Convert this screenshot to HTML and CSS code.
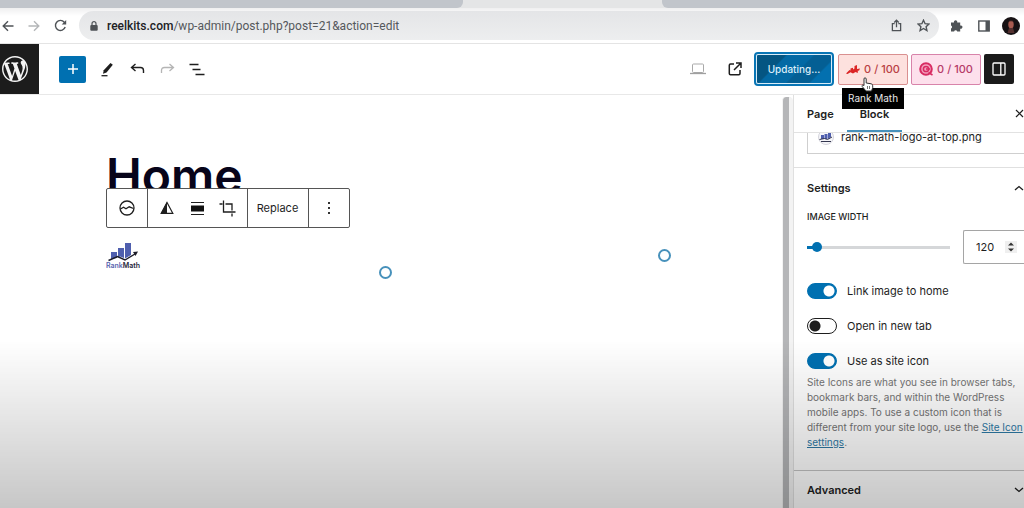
FILE: index.html
```
<!DOCTYPE html>
<html lang="en">
<head>
    <meta charset="UTF-8">
    <meta name="viewport" content="width=device-width, initial-scale=1.0">
    <title>Edit Page - Home</title>
    <link rel="stylesheet" href="styles.css">
</head>
<body>
    <div class="tab-strip">
        <div class="tab tab-left"></div>
        <div class="tab tab-active"></div>
        <div class="tab tab-right"></div>
    </div>

    <div class="browser-bar">
        <nav class="browser-nav">
            <button type="button" aria-label="Back"><svg width="12" height="12" viewBox="0 0 12 12"><path d="M11.5 6H1.5M6 1.2L1.2 6L6 10.8"/></svg></button>
            <button type="button" class="faded" aria-label="Forward"><svg width="12" height="12" viewBox="0 0 12 12"><path d="M.5 6h10M6 1.2L10.8 6L6 10.8"/></svg></button>
            <button type="button" aria-label="Reload"><svg width="13" height="13" viewBox="0 0 13 13"><path d="M11.2 8A5 5 0 1 1 10.3 3.2L11.6 4.6"/><path class="solid" d="M12.2 1v4.5H7.7z"/></svg></button>
        </nav>
        <div class="address">
            <svg class="lock" width="8" height="10" viewBox="0 0 8 10"><path d="M2 4.500V2.700a2 2 0 0 1 4 0V4.500" fill="none" stroke="#4f5357" stroke-width="1.200"/><rect x=".3" y="4" width="7.400" height="5.700" rx="1" fill="#4f5357"/></svg>
            <label class="host" for="url">reelkits.com</label>
            <input type="text" id="url" value="/wp-admin/post.php?post=21&amp;action=edit">
            <button type="button" aria-label="Share"><svg width="11" height="13" viewBox="0 0 12 14"><path d="M4 5H1.500v7.500h9V5H8M6 9V1.500M3.500 3.700L6 1.200l2.500 2.500"/></svg></button>
            <button type="button" aria-label="Bookmark"><svg width="13" height="13" viewBox="0 0 13 13"><path d="M6.500 1.200l1.600 3.500 3.800.4-2.800 2.600.8 3.800-3.400-2-3.400 2 .8-3.800L1.100 5.100l3.800-.4z"/></svg></button>
        </div>
        <div class="browser-tools">
            <button type="button" aria-label="Extensions"><svg width="13" height="13" viewBox="0 0 13 13"><path class="solid" d="M1 3.500h3a1.700 1.700 0 1 1 3.200 0h3v3a1.700 1.700 0 1 1 0 3.200v2.800H7.200a1.600 1.600 0 0 0-3.100 0H1V9.400a1.600 1.600 0 0 0 0-3z"/></svg></button>
            <button type="button" aria-label="Side panel"><svg width="12" height="12" viewBox="0 0 12 12"><rect x=".8" y="1" width="10.400" height="10"/><path class="solid" d="M7.500 1h3.700v10H7.500z"/></svg></button>
            <button type="button" aria-label="Profile"><svg class="avatar" width="18" height="18" viewBox="0 0 18 18"><circle cx="9" cy="9" r="9" fill="#171214"/><ellipse cx="9" cy="7.500" rx="2.700" ry="4" fill="#a85b50"/><path d="M6 4.500Q9 1.500 12 4.500Q9 4 6 4.500z" fill="#2c1c1b"/><path d="M7 11h4l1.500 5h-7z" fill="#54302f"/></svg></button>
        </div>
    </div>

    <header class="editor-header">
        <a href="#" class="wp-logo" aria-label="View Pages">
            <svg width="26" height="26" viewBox="0 0 20 20"><path fill="#f4f4f4" d="M20 10c0-5.510-4.490-10-10-10C4.480 0 0 4.490 0 10c0 5.520 4.480 10 10 10 5.510 0 10-4.480 10-10zM7.780 15.370L4.370 6.220c.55-.02 1.170-.08 1.170-.08.5-.06.44-1.130-.06-1.110 0 0-1.450.11-2.370.11-.18 0-.37 0-.58-.01C4.120 2.690 6.870 1.110 10 1.110c2.330 0 4.450.87 6.050 2.340-.68-.11-1.650.39-1.650 1.580 0 .74.45 1.360.9 2.100.35.610.55 1.360.55 2.460 0 1.490-1.400 5-1.400 5l-3.030-8.370c.54-.02.82-.17.82-.17.5-.05.44-1.250-.06-1.220 0 0-1.440.12-2.380.12-.87 0-2.330-.12-2.330-.12-.5-.03-.56 1.200-.06 1.220l.92.08 1.260 3.410zM17.410 10c.24-.64.74-1.870.43-4.250.7 1.290 1.050 2.710 1.050 4.250 0 3.290-1.730 6.240-4.400 7.780.97-2.590 1.940-5.200 2.920-7.780zM6.100 18.090C3.120 16.650 1.110 13.530 1.110 10c0-1.300.23-2.480.72-3.590C3.250 10.300 4.670 14.200 6.100 18.090zm4.030-6.630l2.580 6.980c-.86.29-1.760.45-2.710.45-.79 0-1.570-.11-2.290-.33.81-2.380 1.620-4.740 2.420-7.100z"/></svg>
        </a>
        <div class="document-tools">
            <button type="button" class="inserter" aria-label="Add block"><svg width="12" height="12" viewBox="0 0 12 12"><path d="M6 1v10M1 6h10" stroke="#fff" stroke-width="1.500"/></svg></button>
            <button type="button" aria-label="Tools"><svg width="14" height="15" viewBox="0 0 14 15"><path fill="#1e1e1e" d="M10.500 1l2.300 1.800-6.300 7.700-3.500 1.200.7-3.400z"/><path d="M1.500 13.700h6" stroke="#1e1e1e" stroke-width="1.300"/></svg></button>
            <button type="button" aria-label="Undo"><svg width="15" height="12" viewBox="0 0 15 12"><path d="M5.500 1L1.500 4.500l4 3.500M2 4.500h8.500q3 0 3 3V10" fill="none" stroke="#1e1e1e" stroke-width="1.400"/></svg></button>
            <button type="button" aria-label="Redo"><svg width="15" height="12" viewBox="0 0 15 12"><path d="M9.500 1l4 3.500-4 3.500M13 4.500H4.500q-3 0-3 3V10" fill="none" stroke="#b5b5b5" stroke-width="1.300"/></svg></button>
            <button type="button" aria-label="Document overview"><svg width="16" height="13" viewBox="0 0 16 13"><path d="M.5 1.500h9M3.500 6.500h8M6.500 11.500h9" stroke="#1e1e1e" stroke-width="1.500"/></svg></button>
        </div>
        <div class="header-settings">
            <button type="button" class="icon-button" aria-label="Preview"><svg width="16" height="12" viewBox="0 0 16 12"><rect x="2.500" y="1" width="11" height="8.500" rx="1" fill="none" stroke="#a9a9a9"/><path d="M0 10.500h16" stroke="#a0a0a0" stroke-width="1.300"/></svg></button>
            <button type="button" class="icon-button" aria-label="View Page"><svg width="14" height="14" viewBox="0 0 14 14"><path d="M6 2H2.500Q1.300 2 1.300 3.200v8.300q0 1.200 1.200 1.200h8.300q1.200 0 1.200-1.200V8M8 1h5v5M13 1L6 8" fill="none" stroke="#1e1e1e" stroke-width="1.500"/></svg></button>
            <button type="button" class="update">Updating...</button>
            <div class="score-wrap">
                <button type="button" class="score score-red" aria-describedby="rm-tip">
                    <svg width="14" height="11" viewBox="0 0 14 11"><path fill="#db2525" d="M0 9.500L3.500 6l1 .6V4.500L7 3.800v1.700l1.500-1V2L11 1v4l3-.5-1 2.200-1.200-.2V9L9.500 8 7 9.500 4.500 8.200 1.500 10z"/></svg>
                    <span>0 / 100</span>
                </button>
                <svg class="pointer" width="13" height="15" viewBox="0 0 13 15"><path d="M3 8.500V2Q3 .8 4 .8T5.200 2v4l5 .8q1.500.3 1.500 2v2L10.500 14H5L1.200 9.500Q.6 8.300 1.700 8z" fill="#fff" stroke="#333" stroke-width="1"/><path d="M6.500 9v3M8.500 9v3" stroke="#555" stroke-width=".8"/></svg>
                <div class="tooltip" id="rm-tip" role="tooltip">Rank Math</div>
            </div>
            <button type="button" class="score score-pink">
                <svg width="14" height="14" viewBox="0 0 14 14"><circle cx="7" cy="7" r="5.800" fill="#f3a2bf" stroke="#d82b62" stroke-width="2"/><circle cx="7" cy="7" r="2.600" fill="none" stroke="#d82b62" stroke-width="1.500"/><path d="M7 7h4M9.500 10.500l4 2.500" stroke="#d82b62" stroke-width="1.500"/></svg>
                <span>0 / 100</span>
            </button>
            <button type="button" class="sidebar-toggle" aria-label="Settings"><svg width="14" height="14" viewBox="0 0 14 14"><rect x="1" y="1" width="12" height="12" rx="1" fill="none" stroke="#fff" stroke-width="1.300"/><path d="M8.800 1v12" stroke="#fff" stroke-width="1.300"/></svg></button>
        </div>
    </header>

    <div class="editor">
        <main class="canvas">
            <h1>Home</h1>
            <div class="block-toolbar">
                <div class="group">
                    <button type="button" aria-label="Site Logo"><svg width="16" height="16" viewBox="0 0 16 16"><circle cx="8" cy="8" r="7" fill="none" stroke="#1e1e1e" stroke-width="1.300"/><path d="M1.500 9l3-1.800 2.500 1.600 3.200-2 4.300 1.700" fill="none" stroke="#1e1e1e" stroke-width="1.300"/></svg></button>
                </div>
                <div class="group">
                    <button type="button" aria-label="Duotone"><svg width="14" height="14" viewBox="0 0 14 14"><path d="M7 1.500L1.200 12.300h11.600z" fill="none" stroke="#1e1e1e" stroke-width="1.200"/><path d="M7 1L.8 12.500H7z" fill="#1e1e1e"/></svg></button>
                    <button type="button" aria-label="Align"><svg width="13" height="15" viewBox="0 0 13 15"><path d="M0 1.500h13M0 13.500h13" stroke="#1e1e1e" stroke-width="1.200"/><path d="M0 4.500h13v6H0z" fill="#111"/></svg></button>
                    <button type="button" aria-label="Crop"><svg width="17" height="17" viewBox="0 0 17 17"><path d="M4.500.5v11.500h12M.5 4h3M6.500 4H13v6.500M13 13.500v3" fill="none" stroke="#1e1e1e" stroke-width="1.300"/></svg></button>
                </div>
                <div class="group">
                    <button type="button" class="replace">Replace</button>
                </div>
                <div class="group">
                    <button type="button" aria-label="Options"><svg width="4" height="14" viewBox="0 0 4 14"><path d="M1 1h2v2H1zM1 6h2v2H1zM1 11h2v2H1z" fill="#333"/></svg></button>
                </div>
            </div>
            <div class="site-logo">
                <svg width="32" height="20" viewBox="0 0 32 20"><path d="M4 10h6v6l-6 1zM11 6h6v10l-4-1.500-2 1zM18 1h6v12l-6 3.500z" fill="#4f5fae"/><path d="M1.500 18.500l9-4 7.500 3.500L28 12" fill="none" stroke="#1c1c28" stroke-width="1.400"/><path d="M26 10l5-.5-2.500 4.500z" fill="#1c1c28"/></svg>
                <div class="logo-text"><span>Rank</span>Math</div>
            </div>
            <span class="handle handle-bottom"></span>
            <span class="handle handle-right"></span>
        </main>
        <div class="scroll-track"></div>

        <aside class="sidebar">
            <div class="sidebar-tabs">
                <button type="button">Page</button>
                <button type="button" class="active">Block</button>
                <button type="button" class="close" aria-label="Close settings"><svg width="9" height="9" viewBox="0 0 9 9"><path d="M1 1l7 7M8 1L1 8" stroke="#1e1e1e" stroke-width="1.200"/></svg></button>
            </div>
            <div class="panels">
                <section class="media">
                    <button type="button" class="media-file">
                        <svg width="16" height="16" viewBox="0 0 16 16"><circle cx="8" cy="8" r="7.500" fill="#f5f5f8" stroke="#d4d4dc"/><path d="M3 6h3v4H3zM6.500 5h3v5h-3zM10 3h3v5l-3 2z" fill="#4f5fae"/><path d="M1.500 10.500l5-1 3 1L14 8M3 12.500h10" fill="none" stroke="#33364f"/></svg>
                        <span>rank-math-logo-at-top.png</span>
                    </button>
                </section>
                <section class="settings">
                    <h2><button type="button">Settings <svg width="10" height="6" viewBox="0 0 10 6"><path d="M1 5l4-3.500L9 5" fill="none" stroke="#1e1e1e" stroke-width="1.300"/></svg></button></h2>
                    <label class="field-label" for="width-range">IMAGE WIDTH</label>
                    <div class="width-row">
                        <input type="range" id="width-range" min="0" max="1000" value="40">
                        <div class="number-box">
                            <input type="number" id="width-number" value="120" aria-label="Image width">
                            <svg width="12" height="12" viewBox="0 0 12 12"><path d="M0 0h12v12H0z" fill="#efefef"/><path d="M3 4.500L6 1.500l3 3zM3 7.500l3 3 3-3z" fill="#333"/></svg>
                        </div>
                    </div>
                    <div class="toggle-row"><input type="checkbox" id="link-home" checked><label for="link-home">Link image to home</label></div>
                    <div class="toggle-row"><input type="checkbox" id="new-tab"><label for="new-tab">Open in new tab</label></div>
                    <div class="toggle-row"><input type="checkbox" id="site-icon" checked><label for="site-icon">Use as site icon</label></div>
                    <p class="help">Site Icons are what you see in browser tabs, bookmark bars, and within the WordPress mobile apps. To use a custom icon that is different from your site logo, use the <a href="#">Site Icon settings</a>.</p>
                </section>
                <section class="advanced">
                    <h2><button type="button">Advanced <svg width="10" height="6" viewBox="0 0 10 6"><path d="M1 1l4 3.500L9 1" fill="none" stroke="#1e1e1e" stroke-width="1.300"/></svg></button></h2>
                </section>
            </div>
        </aside>
    </div>
    <div class="shade"></div>
</body>
</html>
```
FILE: styles.css
```
* {
    box-sizing: border-box;
}
body {
    margin: 0;
    height: 100vh;
    display: flex;
    flex-direction: column;
    overflow: hidden;
    font-family: Inter, "Liberation Sans", sans-serif;
    font-size: 11px;
    color: #1e1e1e;
    background: #fff;
}
button {
    display: flex;
    align-items: center;
    justify-content: center;
    padding: 0;
    border: none;
    background: none;
    font: inherit;
    color: inherit;
    cursor: pointer;
}
svg {
    display: block;
    flex: none;
}

/* browser */
.tab-strip {
    display: flex;
    flex: none;
    height: 8px;
    background: #e4e5e6;
}
.tab {
    background: #c1c5cb;
}
.tab-left {
    flex: 463;
    border-radius: 0 0 6px 0;
}
.tab-active {
    flex: 199;
    background: #e4e5e6;
}
.tab-right {
    flex: 362;
    border-radius: 0 0 0 6px;
}
.browser-bar {
    display: flex;
    align-items: center;
    flex: none;
    height: 36px;
    border-bottom: 1px solid #e4e4e4;
    background: linear-gradient(#efeff0, #fff 8px);
}
.browser-nav, .browser-tools {
    display: flex;
}
.browser-nav {
    margin: 0 6px 0 -5px;
}
.browser-nav button {
    width: 26px;
}
.browser-tools {
    margin-left: 4px;
}
.browser-bar button svg {
    fill: none;
    stroke: #4f5357;
    stroke-width: 1.4;
}
.browser-bar button .solid {
    fill: #4f5357;
    stroke: none;
}
.browser-bar .faded svg {
    stroke: #b4b6b8;
}
.browser-bar button .avatar {
    stroke: none;
}
.browser-tools button, .address button {
    width: 27px;
}
.address {
    flex: 1;
    display: flex;
    align-items: center;
    height: 29px;
    padding: 0 2px 0 11px;
    border-radius: 15px;
    background: linear-gradient(#e4e5e7, #edeeef);
    font-family: Roboto, "Liberation Sans", sans-serif;
    font-size: 12px;
}
.lock {
    margin-right: 9px;
}
.host {
    color: #202124;
    font-weight: 500;
}
#url {
    flex: 1;
    min-width: 0;
    padding: 0;
    border: none;
    outline: none;
    background: none;
    font: inherit;
    color: #55585c;
}

/* editor header */
.editor-header {
    display: flex;
    align-items: center;
    flex: none;
    height: 51px;
    padding-right: 10px;
    border-bottom: 1px solid #e8e8e8;
}
.wp-logo {
    display: flex;
    align-items: center;
    align-self: stretch;
    width: 39px;
    margin-right: 20px;
    padding-left: 2px;
    background: #1c1c1c;
}
.document-tools {
    display: flex;
    flex: 1;
}
.document-tools button {
    width: 30px;
    height: 27px;
}
.document-tools .inserter {
    width: 27px;
    margin-right: 6px;
    border-radius: 2px;
    background: #0070b1;
}
.header-settings {
    display: flex;
    align-items: center;
    gap: 3px;
}
.icon-button {
    width: 34px;
    height: 30px;
}
.update {
    width: 76px;
    height: 30px;
    margin: 0 3px 0 1px;
    border: 1px solid #d8ecf8;
    border-radius: 2px;
    outline: 2px solid #0875b5;
    background: linear-gradient(135deg, #045582 0%, #045582 28%, #0369a4 30%, #0369a4 55%, #045f94 57%, #045f94 78%, #0370af 80%);
    color: #dceefa;
    font-size: 10px;
    font-weight: 500;
}
.score-wrap {
    position: relative;
}
.score {
    gap: 4px;
    width: 70px;
    height: 31px;
    border: 1px solid #d99090;
    border-radius: 2px;
    font-weight: 500;
    font-size: 11px;
}
.score-red {
    background: #fde1de;
    color: #b94144;
}
.score-pink {
    border-color: #d883aa;
    background: #fde0ec;
    color: #b63b68;
}
.tooltip {
    position: absolute;
    z-index: 4;
    top: 34px;
    left: 4px;
    padding: 0 6px;
    background: #000;
    color: #e8e8e8;
    font-size: 10px;
    line-height: 21px;
    white-space: nowrap;
}
.pointer {
    position: absolute;
    z-index: 5;
    top: 23px;
    left: 23px;
}
.sidebar-toggle {
    width: 30px;
    height: 30px;
    border-radius: 2px;
    background: #1a1a1a;
}

/* canvas */
.editor {
    display: flex;
    flex: 1;
    min-height: 0;
}
.canvas {
    position: relative;
    flex: 1;
    min-width: 0;
    padding: 52px 0 0 106px;
}
h1 {
    margin: 0;
    font-size: 48px;
    line-height: 58px;
    font-weight: 600;
    color: #07041a;
}
.block-toolbar {
    position: absolute;
    top: 93px;
    left: 106px;
    display: flex;
    height: 40px;
    border: 1px solid #555;
    border-radius: 2px;
    background: #fff;
}
.group {
    display: flex;
    padding: 0 5px 0 4px;
    border-right: 1px solid #555;
}
.group:first-child {
    padding: 0 5px;
}
.group:last-child {
    padding: 0 5px;
    border-right: none;
}
.group button {
    width: 30px;
}
.group .replace {
    width: 51px;
}
.site-logo {
    width: 36px;
    margin-top: 37px;
}
.site-logo svg {
    margin-left: 1px;
}
.logo-text {
    font-size: 7px;
    line-height: 8px;
    font-weight: 600;
    color: #26263a;
}
.logo-text span {
    color: #5a66b0;
}
.handle {
    position: absolute;
    width: 13px;
    height: 13px;
    border: 2px solid #4791bb;
    border-radius: 50%;
    background: #fff;
}
.handle-bottom {
    top: 171px;
    left: 379px;
}
.handle-right {
    top: 154px;
    left: 658px;
}
.scroll-track {
    width: 11px;
    margin-top: 2px;
    border: solid #f3f3f3;
    border-width: 0 4px 0 1px;
    border-radius: 4px 4px 0 0;
    background: #b5b6b8;
}

/* sidebar */
.sidebar {
    display: flex;
    flex-direction: column;
    width: 231px;
    border-left: 1px solid #e0e0e0;
}
.sidebar-tabs {
    display: flex;
    flex: none;
    height: 38px;
    border-bottom: 1px solid #e2e2e2;
}
.sidebar-tabs button {
    padding: 0 13px;
    font-weight: 600;
}
.sidebar-tabs .active {
    border-bottom: 2px solid #4791bb;
    border-top: 2px solid transparent;
}
.sidebar-tabs .close {
    margin-left: auto;
    padding: 0;
}
.panels {
    flex: 1;
    min-height: 0;
    overflow: hidden;
}
.media {
    padding: 0 0 13px 13px;
    border-bottom: 1px solid #e0e0e0;
}
.media-file {
    justify-content: flex-start;
    gap: 7px;
    width: 100%;
    height: 34px;
    margin-top: -13px;
    padding-left: 10px;
    border: 1px solid #cfcfcf;
    border-right: none;
    line-height: 10px;
}
.settings {
    padding: 0 0 20px 13px;
    border-bottom: 1px solid #c4c4c4;
}
h2 {
    margin: 0;
    font-size: 11px;
    font-weight: 600;
}
h2 button {
    justify-content: space-between;
    width: 100%;
    height: 40px;
}
.field-label {
    display: block;
    font-size: 9px;
    line-height: 18px;
    font-weight: 500;
}
.width-row {
    display: flex;
    align-items: center;
    gap: 13px;
    margin-top: 4px;
}
#width-range {
    flex: 1;
    min-width: 0;
    height: 12px;
    margin: 0;
    appearance: none;
    background: linear-gradient(90deg, #0070b1 7%, #d5d7d9 7%) center / 100% 3px no-repeat;
}
#width-range::-webkit-slider-thumb {
    appearance: none;
    width: 10px;
    height: 10px;
    border-radius: 50%;
    background: #0070b1;
}
.number-box {
    display: flex;
    align-items: center;
    width: 61px;
    height: 34px;
    padding-left: 12px;
    border: 1px solid #a5a5a5;
    border-right: none;
    border-radius: 2px 0 0 2px;
}
#width-number {
    width: 29px;
    padding: 0;
    border: none;
    outline: none;
    background: none;
    font: inherit;
    color: inherit;
    appearance: textfield;
}
#width-number::-webkit-inner-spin-button {
    display: none;
}
.toggle-row {
    display: flex;
    align-items: center;
    gap: 10px;
    height: 16px;
    margin-top: 19px;
}
.toggle-row input {
    width: 30px;
    height: 16px;
    margin: 0;
    appearance: none;
    border: 1px solid #1e1e1e;
    border-radius: 8px;
    background: radial-gradient(circle at 7px 7px, #1e1e1e 5px, #fff 6px);
}
.toggle-row input:checked {
    border-color: #0070b1;
    background: radial-gradient(circle at 21px 7px, #fff 5px, #0070b1 6px);
}
.help {
    margin: 6px 0 0;
    font-size: 10px;
    line-height: 15px;
    color: #757575;
}
.help a {
    color: #2e7aa6;
}
.advanced {
    border-bottom: 1px solid #c4c4c4;
    padding-left: 13px;
}
.advanced button {
    height: 37px;
}

/* darkening towards the bottom of the window */
.shade {
    position: fixed;
    z-index: 10;
    inset: auto 0 0;
    height: 33%;
    pointer-events: none;
    background: linear-gradient(rgba(0, 0, 0, 0), rgba(0, 0, 0, .22));
}
```
